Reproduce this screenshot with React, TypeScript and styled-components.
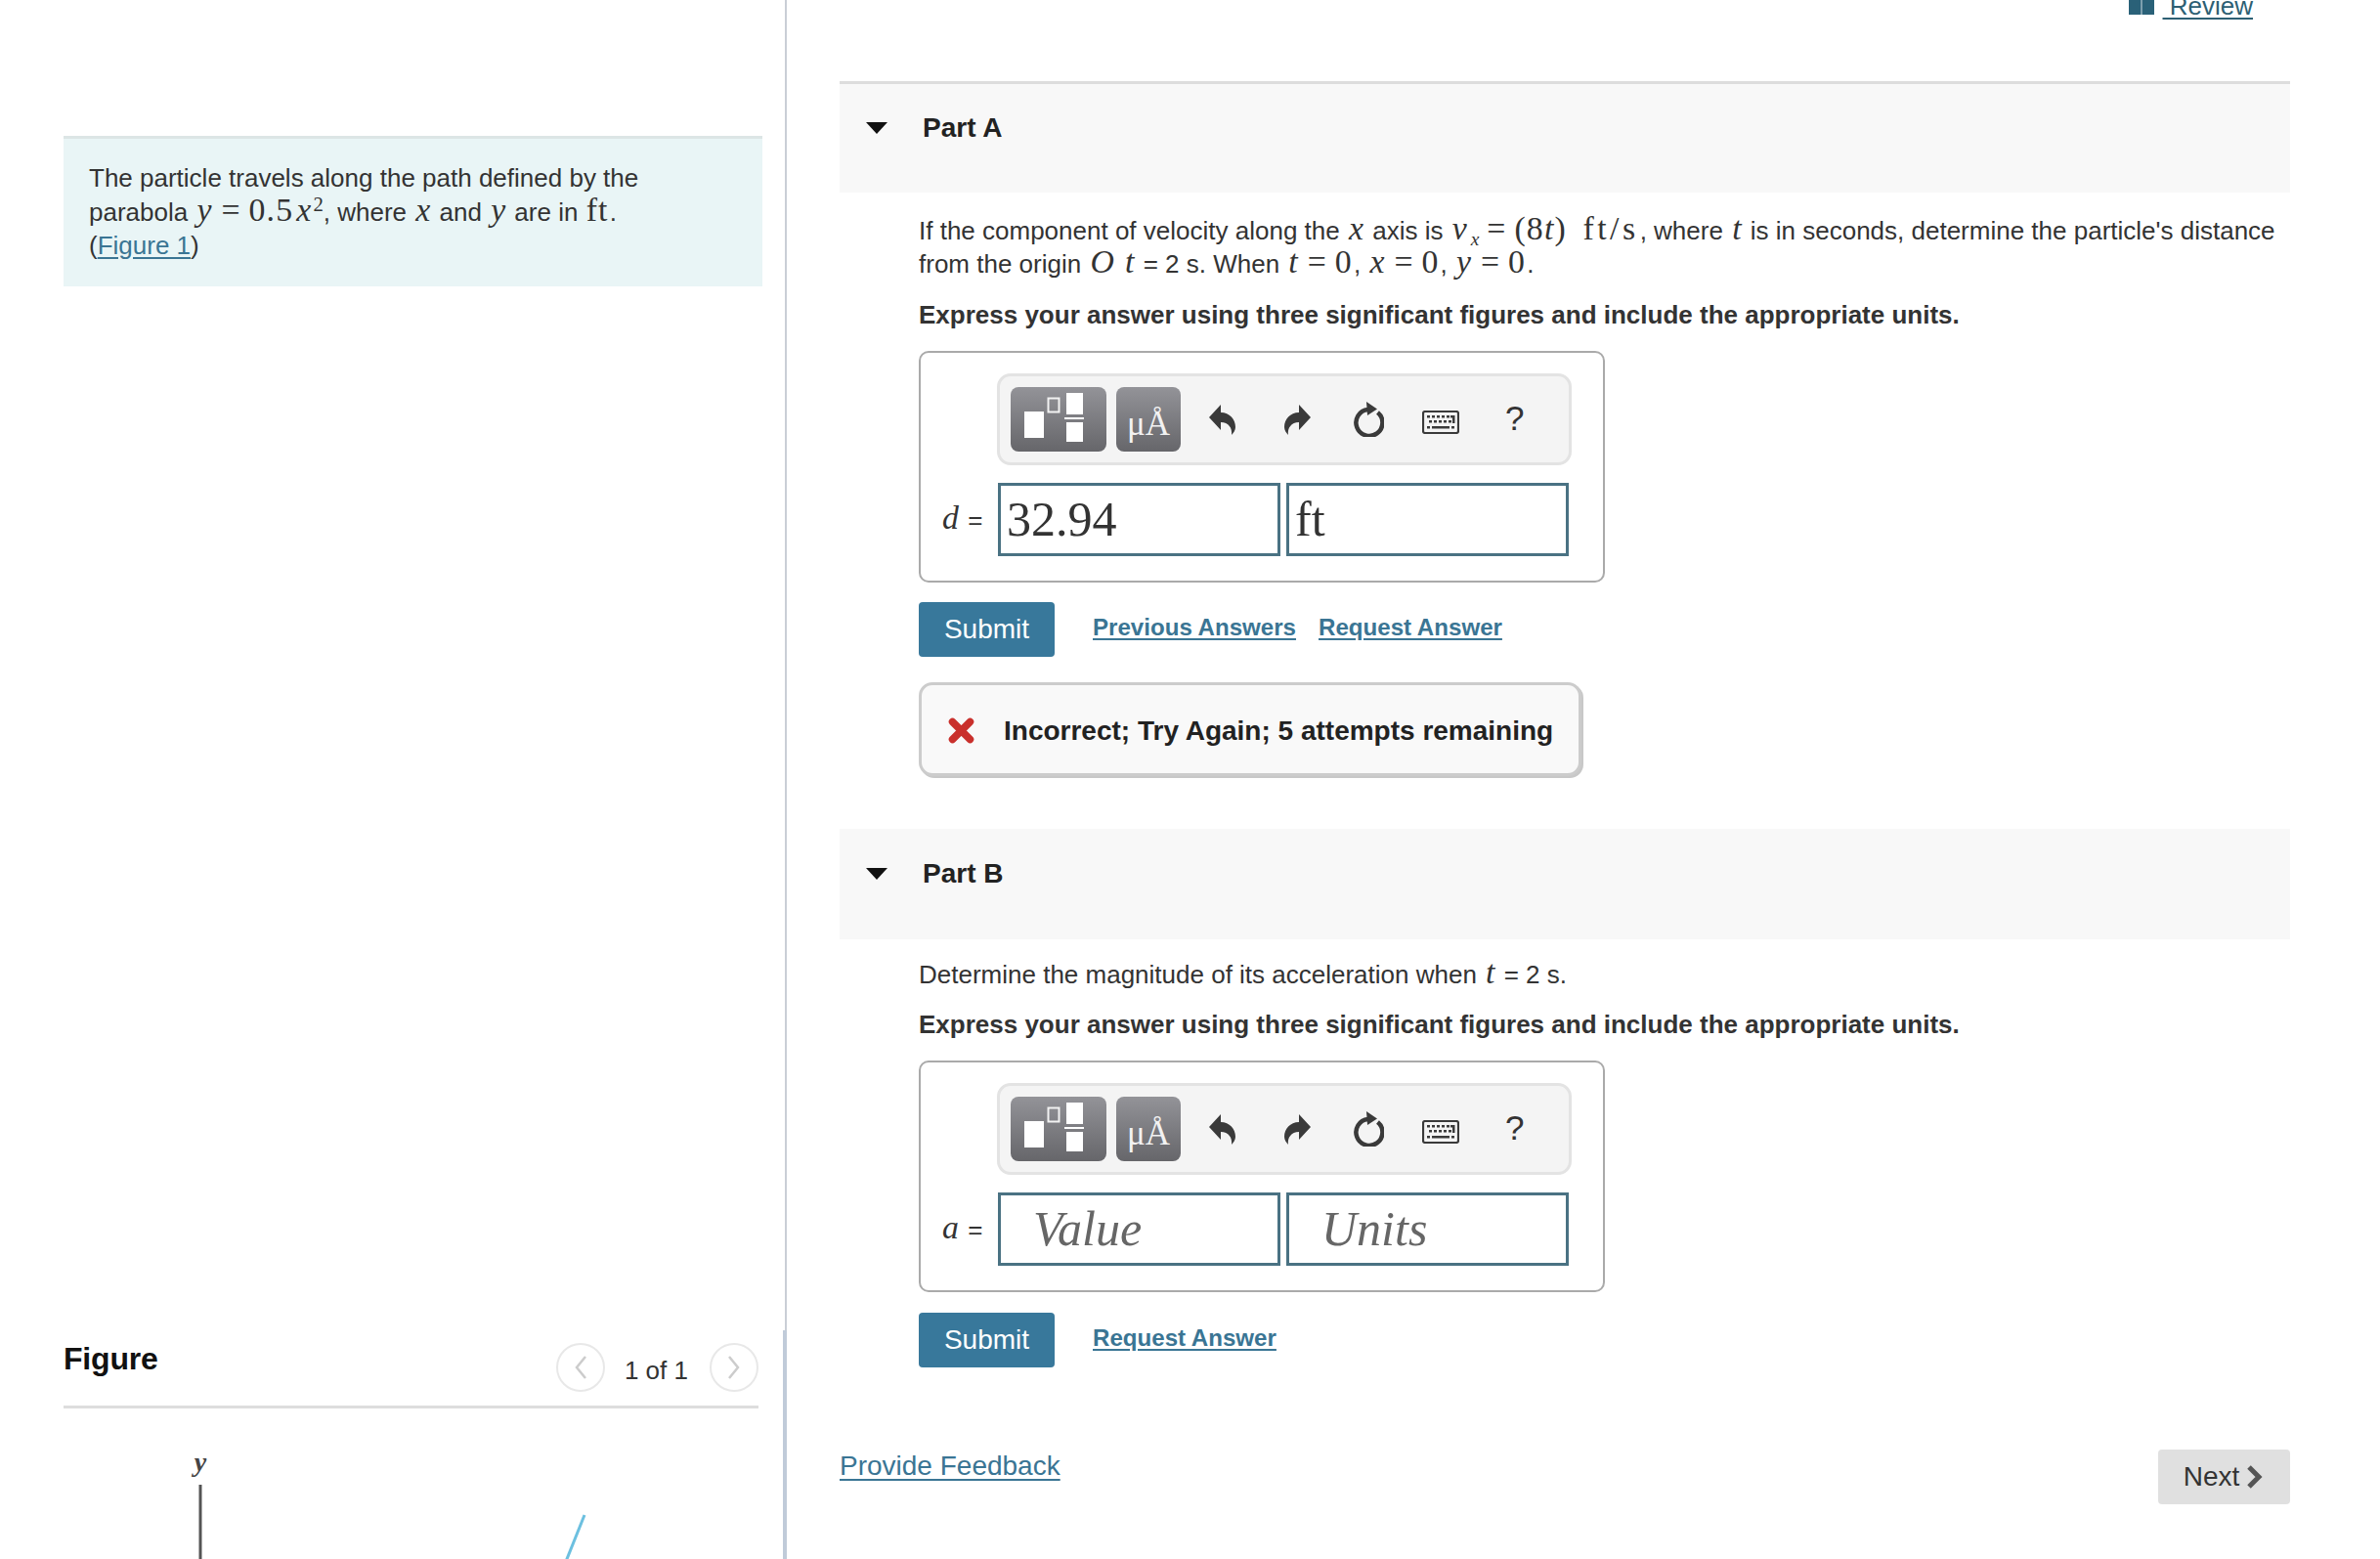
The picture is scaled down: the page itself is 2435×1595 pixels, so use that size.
import React from "react";
import styled, { createGlobalStyle } from "styled-components";

const Global = createGlobalStyle`
  html, body { margin: 0; padding: 0; background: #fff; }
  body { width: 2435px; height: 1595px; overflow: hidden; font-family: "Liberation Sans", Arial, sans-serif; color: #333; font-size: 26px; }
`;
const Page = styled.div`display: flex; width: 2435px; height: 1595px; overflow: hidden;`;
const LeftCol = styled.aside`
  width: 805px; flex: none; box-sizing: border-box; padding: 139px 27px 0 65px; position: relative;
  border-right: 2px solid #c9ced6; 
  &::after { content: ""; position: absolute; right: -2px; top: 1361px; bottom: 0; width: 4px; background: #c0cbd9; }
`;
const Intro = styled.div`
  box-sizing: border-box; width: 715px; height: 154px; background: #e9f5f6; border-top: 3px solid #dce5e5;
  padding: 23px 25px 0 26px; font-size: 26px; line-height: 34.5px;
`;
const FigureHead = styled.div`
  display: flex; align-items: flex-start; justify-content: space-between; width: 711px; height: 64px;
  margin-top: 1081px; border-bottom: 3px solid #ddd;
`;
const FigureTitle = styled.h2`margin: -2px 0 0; font-size: 32px; line-height: 36px; font-weight: 700; color: #111; letter-spacing: -0.2px;`;
const Pager = styled.div`display: flex; align-items: center;`;
const PageBtn = styled.span`
  width: 50px; height: 50px; box-sizing: border-box; border: 2px solid #e8e8e8; border-radius: 50%;
  display: flex; align-items: center; justify-content: center;
`;
const PageText = styled.span`font-size: 26px; margin: 6px 22px 0 20px; color: #333;`;
const Diagram = styled.svg`display: block; margin: 44px 0 0 0; overflow: visible;`;

const RightCol = styled.main`flex: none; width: 1484px; margin-left: 54px;`;
const TopBar = styled.div`display: flex; justify-content: flex-end; align-items: flex-start; height: 83px; padding-right: 38px; box-sizing: border-box;`;
const ReviewLink = styled.a`
  display: flex; align-items: flex-start; gap: 9px; margin-top: -9px; color: #2d5f73; font-size: 26px; line-height: 30px;
  span { text-decoration: underline; text-underline-offset: 3px; white-space: pre; }
  svg { margin-top: 8px; }
`;
const PartBand = styled.div<{ $top?: boolean }>`
  box-sizing: border-box; height: ${p => (p.$top ? 114 : 113)}px; background: #f8f8f8;
  border-top: ${p => (p.$top ? "3px solid #ddd" : "0")};
  display: flex; align-items: flex-start; padding: ${p => (p.$top ? 29 : 30)}px 0 0 27px;
`;
const Caret = styled.span`
  width: 0; height: 0; border-left: 11px solid transparent; border-right: 11px solid transparent; border-top: 12px solid #111;
  margin: 10px 36px 0 0;
`;
const PartTitle = styled.h3`margin: 0; font-size: 28px; line-height: 32px; font-weight: 700; color: #222;`;
const PartBody = styled.section<{ $pt: number; $h: number }>`padding: ${p => p.$pt}px 0 0 81px; height: ${p => p.$h}px; box-sizing: border-box;`;
const Para = styled.p`margin: 0; font-size: 26px; line-height: 34px; white-space: nowrap; color: #333;`;
const Strong = styled.p<{ $mt: number }>`margin: ${p => p.$mt}px 0 0; font-size: 26px; line-height: 33px; font-weight: 700; color: #333; white-space: nowrap;`;
const AnswerBox = styled.div<{ $mt: number }>`
  box-sizing: border-box; width: 702px; height: 237px; margin-top: ${p => p.$mt}px; border: 2px solid #aaa; border-radius: 10px;
  padding: 21px 0 0 78px;
`;
const Toolbar = styled.div`
  box-sizing: border-box; width: 588px; height: 94px; background: #f4f4f4; border: 3px solid #e3e3e3; border-radius: 14px;
  display: flex; align-items: center; padding-left: 11px; position: relative;
`;
const TplBtn = styled.span<{ $w: number }>`
  width: ${p => p.$w}px; height: 66px; flex: none; margin-right: 10px; border-radius: 8px; background: linear-gradient(#939398, #66666a);
  display: flex; align-items: center; justify-content: center; color: #fff;
`;
const Mu = styled.span`font-family: "Liberation Serif", serif; font-size: 35px; line-height: 1; margin-top: 8px;  color: #f2f2f2;`;
const ToolIcon = styled.span<{ $w: number; $ml: number; $mt?: number }>`
  width: ${p => p.$w}px; margin-left: ${p => p.$ml}px; margin-top: ${p => p.$mt ?? 0}px; flex: none; display: flex; justify-content: center; color: #3a3a3a;
`;
const Help = styled.span`font-size: 35px; color: #333; line-height: 1; margin-left: 47px; margin-top: -4px; width: 18px;`;
const InputRow = styled.div`display: flex; align-items: center; margin: 18px 0 0 -58px;`;
const VarLabel = styled.span`width: 59px; box-sizing: border-box; font-size: 26px; flex: none; white-space: nowrap; margin-top: 2px;`;
const Field = styled.div<{ $ph?: boolean; $ml?: number }>`
  box-sizing: border-box; width: 289px; height: 75px; border: 3px solid #4a7283; margin-left: ${p => p.$ml ?? 0}px; flex: none;
  font-family: "Liberation Serif", serif; font-size: 50px; line-height: 69px; white-space: nowrap;
  padding-left: ${p => (p.$ph ? 33 : 6)}px; color: ${p => (p.$ph ? "#666" : "#333")}; font-style: ${p => (p.$ph ? "italic" : "normal")};
`;
const ActionRow = styled.div<{ $mt: number }>`display: flex; align-items: flex-start; margin-top: ${p => p.$mt}px;`;
const Submit = styled.button`
  width: 139px; height: 56px; border: 0; border-radius: 4px; background: #38789b; color: #fff; padding: 0;
  font: 400 28px "Liberation Sans", Arial, sans-serif; margin-right: 39px;
`;
const BoldLink = styled.a`
  font-size: 24.1px; font-weight: 700; line-height: 30px; margin: 11px 23px 0 0; color: #3a7594; text-decoration: underline; text-underline-offset: 3px; white-space: nowrap;
`;
const Alert = styled.div`
  box-sizing: border-box; width: 678px; height: 96px; margin-top: 26px; background: #f9f9f9; border: 3px solid #ccc; border-radius: 14px;
  box-shadow: 2px 2px 0 #c8c8c8; display: flex; align-items: center; padding: 3px 0 0 27px; gap: 30px;
  font-size: 28px; font-weight: 700; color: #222; white-space: nowrap;
`;
const BottomBar = styled.div`display: flex; justify-content: space-between; align-items: flex-start;`;
const Feedback = styled.a`font-size: 28px; line-height: 32px; margin-top: 1px; color: #3a7594; text-decoration: underline; text-underline-offset: 4px;`;
const NextBtn = styled.button`
  width: 135px; height: 56px; border: 0; border-radius: 4px; background: #e0e0e0; color: #333; padding: 0 2px 0 0; display: flex; align-items: center; justify-content: center; gap: 7px;
  font: 400 28px "Liberation Sans", Arial, sans-serif;
`;
const V = styled.i`font-family: "Liberation Serif", serif; font-style: italic; font-size: 1.3em; line-height: 0; padding: 0 2px;`;
const M = styled.span`font-family: "Liberation Serif", serif; font-size: 1.3em; line-height: 0; letter-spacing: 1.2px; padding: 0 1px;`;
const UnitText = styled(M)`letter-spacing: 3.5px;`;
const MV = styled.i`font-style: italic;`;
const Eq = styled.span`font-family: "Liberation Serif", serif; font-size: 1.3em; line-height: 0; padding: 0 8px;`;
const Sub = styled.sub`font-size: 0.75em; font-family: "Liberation Serif", serif; font-style: italic; line-height: 0; padding-left: 2px;`;
const Sup = styled.sup`font-size: 0.8em; font-family: "Liberation Serif", serif; line-height: 0;`;
const Link = styled.a`color: #3a7594; text-decoration: underline; text-underline-offset: 3px;`;

const TemplateIcon = () => (
  <svg width="76" height="56" viewBox="0 0 76 56">
    <rect x="3" y="20" width="20" height="27" fill="#fff" />
    <rect x="27.5" y="6.5" width="11" height="14" fill="none" stroke="#f2f2f2" strokeWidth="2" />
    <rect x="46" y="1" width="17" height="22" fill="#fff" />
    <rect x="44" y="26" width="20" height="2" fill="#fff" />
    <rect x="46" y="31" width="17" height="20" fill="#fff" />
  </svg>
);
const Undo = () => (
  <svg width="27" height="31" viewBox="0 0 27 31"><path fill="currentColor" d="M0 13 L12 0 V8 C21 8 27 15 27 23 C27 26 25 29 23 31 C24 24 20 18 12 18 V26 Z" /></svg>
);
const Redo = () => (
  <svg width="27" height="31" viewBox="0 0 27 31"><path fill="currentColor" d="M27 13 L15 0 V8 C6 8 0 15 0 23 C0 26 2 29 4 31 C3 24 7 18 15 18 V26 Z" /></svg>
);
const Reload = () => (
  <svg width="32" height="36" viewBox="0 0 32 36">
    <path fill="none" stroke="currentColor" strokeWidth="4.5" d="M25.5 11 A13.5 13.5 0 1 1 15.5 8" />
    <path fill="currentColor" d="M14 0 L25 7.5 L15 14 Z" />
  </svg>
);
const Keyboard = () => (
  <svg width="38" height="24" viewBox="0 0 38 24">
    <rect x="1" y="1" width="36" height="22" rx="2" fill="none" stroke="currentColor" strokeWidth="2.2" />
    <g fill="currentColor">
      {[5, 10, 15, 20, 25, 29].map(x => <rect key={x} x={x} y="5" width="3" height="2.5" />)}
      {[7, 12, 17, 22, 27].map(x => <rect key={x} x={x} y="10" width="3" height="2.5" />)}
      <rect x="31" y="5" width="2.5" height="8" />
      <rect x="5" y="16" width="3" height="2.5" />
      <rect x="10" y="16" width="18" height="2.5" />
      <rect x="30" y="16" width="3" height="2.5" />
    </g>
  </svg>
);
const Chevron = ({ dir }: { dir: "l" | "r" }) => (
  <svg width="14" height="24" viewBox="0 0 14 24">
    <polyline points={dir === "l" ? "12,1 3,12 12,23" : "2,1 11,12 2,23"} fill="none" stroke="#ccc" strokeWidth="2.5" />
  </svg>
);

const Tools = () => (
  <Toolbar>
    <TplBtn $w={98}><TemplateIcon /></TplBtn>
    <TplBtn $w={66}><Mu>μÅ</Mu></TplBtn>
    <ToolIcon $w={27} $ml={19}><Undo /></ToolIcon>
    <ToolIcon $w={27} $ml={50}><Redo /></ToolIcon>
    <ToolIcon $w={32} $ml={43}><Reload /></ToolIcon>
    <ToolIcon $w={38} $ml={39} $mt={5}><Keyboard /></ToolIcon>
    <Help>?</Help>
  </Toolbar>
);

export default function App() {
  return (
    <Page>
      <Global />
      <LeftCol>
        <Intro>
          The particle travels along the path defined by the<br />
          parabola <V>y</V><Eq>=</Eq><M>0.5</M><V>x</V><Sup>2</Sup>, where <V>x</V> and <V>y</V> are in <M>ft</M>.<br />
          (<Link>Figure 1</Link>)
        </Intro>
        <FigureHead>
          <FigureTitle>Figure</FigureTitle>
          <Pager>
            <PageBtn><Chevron dir="l" /></PageBtn>
            <PageText>1 of 1</PageText>
            <PageBtn><Chevron dir="r" /></PageBtn>
          </Pager>
        </FigureHead>
        <Diagram width="711" height="110" viewBox="0 0 711 110">
          <text x="140" y="20" fontFamily="Liberation Serif" fontStyle="italic" fontWeight="700" fontSize="28" fill="#444" textAnchor="middle">y</text>
          <line x1="140" y1="34" x2="140" y2="110" stroke="#555" strokeWidth="3" />
          <line x1="533" y1="65" x2="513" y2="115" stroke="#6cc0e0" strokeWidth="3" />
        </Diagram>
      </LeftCol>
      <RightCol>
        <TopBar>
          <ReviewLink>
            <svg width="26" height="16" viewBox="0 0 26 16"><path fill="#2a6178" d="M0 0h12v16H0zM14 0h12v16H14z" /><rect x="12" width="2" height="16" fill="#7d9fae" /></svg>
            <span> Review</span>
          </ReviewLink>
        </TopBar>
        <PartBand $top><Caret /><PartTitle>Part A</PartTitle></PartBand>
        <PartBody $pt={22} $h={651}>
          <Para>
            If the component of velocity along the <V>x</V> axis is <V>v</V><Sub>x</Sub><Eq>=</Eq><M>(8<MV>t</MV>)</M>&nbsp; <UnitText>ft/s</UnitText>, where <V>t</V> is in seconds, determine the particle's distance<br />
            from the origin <V>O</V> <V>t</V> = 2 s. When <V>t</V><Eq>=</Eq><M>0</M>, <V>x</V><Eq>=</Eq><M>0</M>, <V>y</V><Eq>=</Eq><M>0</M>.
          </Para>
          <Strong $mt={19}>Express your answer using three significant figures and include the appropriate units.</Strong>
          <AnswerBox $mt={20}>
            <Tools />
            <InputRow>
              <VarLabel><V>d</V> =</VarLabel>
              <Field>32.94</Field>
              <Field $ml={6}>ft</Field>
            </InputRow>
          </AnswerBox>
          <ActionRow $mt={20}>
            <Submit>Submit</Submit>
            <BoldLink>Previous Answers</BoldLink>
            <BoldLink>Request Answer</BoldLink>
          </ActionRow>
          <Alert>
            <svg width="27" height="27" viewBox="0 0 27 27"><path stroke="#c9302c" strokeWidth="7.5" strokeLinecap="round" d="M4.5 4.5 L22.5 22.5 M22.5 4.5 L4.5 22.5" /></svg>
            Incorrect; Try Again; 5 attempts remaining
          </Alert>
        </PartBody>
        <PartBand><Caret /><PartTitle>Part B</PartTitle></PartBand>
        <PartBody $pt={19} $h={522}>
          <Para>Determine the magnitude of its acceleration when <V>t</V> = 2 s.</Para>
          <Strong $mt={18}>Express your answer using three significant figures and include the appropriate units.</Strong>
          <AnswerBox $mt={20}>
            <Tools />
            <InputRow>
              <VarLabel><V>a</V> =</VarLabel>
              <Field $ph>Value</Field>
              <Field $ph $ml={6}>Units</Field>
            </InputRow>
          </AnswerBox>
          <ActionRow $mt={21}>
            <Submit>Submit</Submit>
            <BoldLink>Request Answer</BoldLink>
          </ActionRow>
        </PartBody>
        <BottomBar>
          <Feedback>Provide Feedback</Feedback>
          <NextBtn>Next
            <svg width="17" height="24" viewBox="0 0 17 24"><polyline points="3,2 13,12 3,22" fill="none" stroke="#555" strokeWidth="5" /></svg>
          </NextBtn>
        </BottomBar>
      </RightCol>
    </Page>
  );
}
